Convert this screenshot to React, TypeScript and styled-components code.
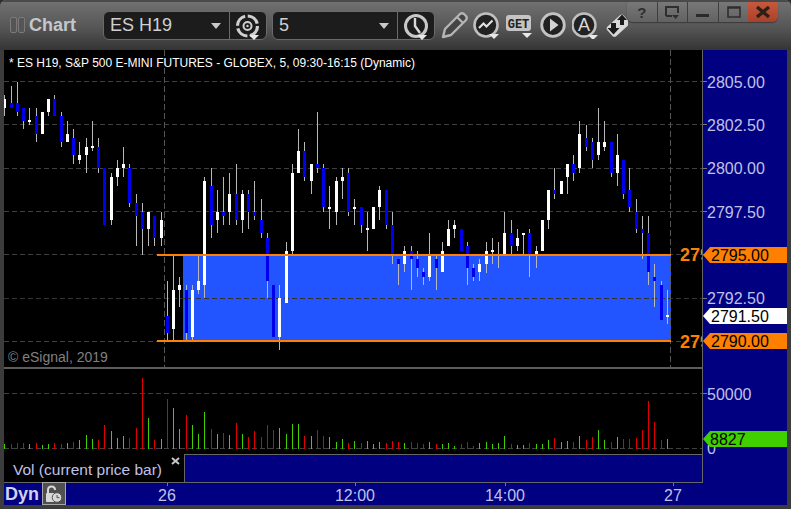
import React from "react";
import styled, { createGlobalStyle } from "styled-components";

const Global = createGlobalStyle`
  html, body { margin: 0; padding: 0; background: #2e2e2e; }
  body { font-family: "Liberation Sans", Arial, sans-serif; }
`;

// wick top, wick bottom, body top, body bottom, up?
const CANDLES: [number, number, number, number, number][] = [
  [95,116,99,108,1],[86,108,103,108,0],[82,116,103,112,0],[108,129,108,121,0],[108,125,120,122,1],
  [108,142,116,134,0],[112,134,112,134,1],[99,116,99,112,1],[95,116,99,116,0],[112,147,116,142,0],
  [121,142,134,142,1],[129,164,138,155,0],[142,164,155,160,1],[138,173,147,155,1],[121,151,146,148,1],
  [138,173,147,168,0],[168,225,168,225,0],[173,225,177,220,1],[160,186,168,177,1],[147,177,164,168,1],
  [164,207,168,203,0],[194,246,203,216,0],[203,255,212,229,0],[212,246,212,229,1],[216,246,216,238,0],
  [212,246,220,238,1],[281,340,316,333,0],[255,341,290,329,1],[277,307,285,290,1],[285,341,290,333,0],
  [285,341,290,337,1],[255,294,281,290,1],[177,298,181,285,1],[168,238,186,225,0],[190,233,212,220,1],
  [177,225,212,216,0],[173,225,194,212,1],[164,225,194,220,0],[190,233,194,220,1],[190,229,194,212,0],
  [181,220,212,216,0],[199,238,220,233,0],[233,298,238,281,0],[285,337,285,337,0],[285,350,298,337,1],
  [242,303,251,303,1],[164,255,173,251,1],[129,173,151,173,1],[142,181,151,177,0],[164,194,164,181,1],
  [112,173,164,168,0],[164,212,168,207,0],[186,229,207,209,1],[177,225,181,212,1],[168,199,177,181,1],
  [168,216,173,212,0],[199,225,207,209,1],[207,233,207,225,0],[212,251,228,230,1],[207,229,207,229,1],
  [186,220,190,207,1],[190,229,190,225,0],[212,264,225,255,0],[259,285,259,264,0],[246,272,251,264,1],
  [246,290,251,259,0],[251,277,259,268,0],[268,285,272,277,0],[233,281,255,277,1],[256,290,259,268,0],
  [242,272,251,272,1],[220,246,229,246,1],[220,238,225,229,1],[229,251,229,251,0],[242,285,246,268,0],
  [264,281,268,277,0],[259,281,264,272,1],[242,273,251,264,1],[238,264,250,252,1],[242,268,254,256,1],
  [212,255,233,255,1],[220,255,233,246,0],[229,251,238,246,1],[233,255,233,235,1],[229,277,233,255,0],
  [246,268,251,255,1],[220,251,220,251,1],[190,229,190,220,1],[168,199,190,194,0],[181,194,181,194,1],
  [164,194,164,177,1],[155,181,164,173,0],[121,173,134,168,1],[125,151,138,147,0],[138,168,142,160,0],
  [108,160,142,155,1],[121,151,142,147,1],[142,177,142,173,0],[134,186,155,173,1],[160,199,160,194,0],
  [168,212,190,207,0],[199,233,212,229,0],[216,259,229,233,0],[216,285,233,272,0],[264,307,277,281,0],
  [281,320,285,320,0],[290,324,315,317,1],
];

// top in the 3x crop (baseline at 250), g = green
const VOLUMES: [number, number][] = [
  [237,1],[237,0],[234,0],[234,0],[237,1],[234,0],[240,1],[237,1],[234,0],[237,0],[234,1],[231,0],[225,1],[210,1],[222,1],[225,0],
  [180,0],[198,1],[219,1],[213,1],[219,0],[189,0],[39,0],[159,1],[225,0],[222,1],[102,0],[129,1],[192,1],[150,0],[180,1],[207,1],
  [141,1],[192,0],[207,1],[204,0],[210,1],[174,0],[207,1],[216,0],[198,0],[216,0],[180,0],[195,0],[189,1],[207,1],[177,1],[177,1],
  [213,0],[213,1],[195,0],[213,0],[216,1],[231,1],[222,1],[234,0],[228,1],[234,0],[228,1],[237,1],[231,1],[234,0],[228,0],[231,0],
  [234,1],[231,0],[234,0],[237,0],[231,1],[237,0],[237,1],[234,1],[243,1],[237,0],[231,0],[243,0],[234,1],[231,1],[237,1],[234,1],
  [213,1],[237,0],[240,1],[240,1],[234,0],[237,1],[237,1],[225,1],[219,0],[231,1],[228,1],[231,0],[213,1],[225,0],[216,0],[195,1],
  [225,1],[231,0],[216,1],[222,0],[222,0],[219,0],[195,0],[108,0],[171,0],[225,0],[222,1],
];

const colOf = (i: number) => Math.floor(4.75 + 6.25 * i);
const GRID_Y = [81, 124, 168, 211, 254, 298, 341];
const AXIS_TEXT = "#c0c0e8";
const ORANGE = "#ff8000";

const Window = styled.div`
  width: 791px;
  height: 509px;
  background: #3c3c3c;
  overflow: hidden;
  display: flex;
  flex-direction: column;
  position: relative;
  border-radius: 6px 6px 0 0;
`;

const TitleBar = styled.header`
  height: 50px;
  box-sizing: border-box;
  padding: 11px 0 0 10px;
  display: flex;
  align-items: flex-start;
  background: linear-gradient(#727272 0, #686868 20%, #565656 55%, #343434 100%);
  box-shadow: inset 0 2px 0 #4a4a4a;
`;

const Brand = styled.div`
  width: 93px;
  height: 28px;
  display: flex;
  align-items: center;
  gap: 1px;
`;

const Grip = styled.span`
  width: 5px;
  height: 14px;
  border: 1px solid #7a7a7a;
  background: #555;
  border-radius: 2px;
`;

const BrandName = styled.span`
  margin-left: 3px;
  font-size: 18px;
  font-weight: 700;
  color: #c4c8cc;
`;

const Combo = styled.div<{ $width: number }>`
  width: ${(p) => p.$width}px;
  height: 29px;
  box-sizing: border-box;
  margin-right: 5px;
  display: flex;
  background: #1c1c1c;
  border: 1px solid #6a6a6a;
  border-radius: 6px;
`;

const Field = styled.div`
  flex: 1;
  display: flex;
  align-items: center;
  justify-content: space-between;
  padding: 0 8px 0 6px;
  font-size: 18px;
  color: #cfcfcf;
  border-right: 1px solid #6a6a6a;
`;

const Caret = styled.span`
  width: 0;
  height: 0;
  border-left: 5px solid transparent;
  border-right: 5px solid transparent;
  border-top: 6px solid #c8c8c8;
`;

const ComboIcon = styled.div`
  width: 36px;
  display: flex;
  align-items: center;
  justify-content: center;
`;

const IconStrip = styled.div`
  display: flex;
  align-items: center;
  height: 28px;
  margin-left: 1px;
`;

const ToolIcon = styled.svg<{ $w: number }>`
  width: ${(p) => p.$w}px;
  height: 28px;
  flex: none;
  display: block;
`;

const WindowButtons = styled.div`
  position: absolute;
  top: 2px;
  left: 627px;
  width: 151px;
  height: 20px;
  display: flex;
  border-radius: 2px 2px 6px 6px;
  overflow: hidden;
  box-shadow: 0 1px 1px #3a3a3a;
`;

const WinBtn = styled.div<{ $close?: boolean }>`
  flex: 1;
  display: flex;
  align-items: center;
  justify-content: center;
  font-size: 15px;
  font-weight: 700;
  color: #2e2e2e;
  background: ${(p) => (p.$close ? "linear-gradient(#c8583c, #a8412a)" : "linear-gradient(#787878, #626262)")};
  border-left: ${(p) => (p.$close ? "none" : "1px solid #3f3f3f")};
  &:first-child { border-left: none; }
`;

const Main = styled.div`
  display: flex;
  margin: 0 4px;
  height: 433px;
`;

const Panes = styled.div`
  width: 698px;
  display: flex;
  flex-direction: column;
  background: #000;
  border-bottom: 1px solid #666;
`;

const PaneSvg = styled.svg<{ $h: number }>`
  display: block;
  width: 698px;
  height: ${(p) => p.$h}px;
  background: #000;
  flex: none;
`;

const PaneDivider = styled.div`
  height: 2px;
  flex: none;
  background: #5c5c5c;
`;

const LegendRow = styled.div`
  flex: 1;
  display: flex;
`;

const Legend = styled.div`
  position: relative;
  width: 180px;
  box-sizing: border-box;
  padding: 7px 0 0 9px;
  font-size: 15.5px;
  line-height: 18px;
  color: ${AXIS_TEXT};
  background: #000;
`;

const LegendClose = styled.svg`
  position: absolute;
  top: 3px;
  right: 4px;
  width: 9px;
  height: 8px;
`;

const LegendFill = styled.div`
  flex: 1;
  background: #000080;
  border-top: 1px solid #666;
  border-left: 1px solid #666;
`;

const AxisSvg = styled.svg`
  display: block;
  width: 85px;
  height: 433px;
  background: #000080;
  flex: none;
`;

const TimeAxis = styled.div`
  margin: 0 4px;
  height: 22px;
  display: flex;
  align-items: stretch;
  background: #000080;
`;

const DynLabel = styled.span`
  width: 38px;
  box-sizing: border-box;
  padding-left: 1px;
  font-size: 18px;
  font-weight: 700;
  line-height: 22px;
  color: #d0d0f0;
`;

const LockButton = styled.div`
  width: 24px;
  height: 23px;
  margin-top: -1px;
  box-sizing: border-box;
  border: 1px solid #a8a8a8;
  background: #505050;
  display: flex;
  align-items: center;
  justify-content: center;
`;

const TimeSvg = styled.svg`
  display: block;
  flex: 1;
  height: 22px;
`;

const Arrow = ({ x, y }: { x: number; y: number }) => (
  <polygon points={`${x - 5},${y} ${x + 5},${y} ${x},${y + 5}`} fill="#e8e8e8" />
);

const GearIcon = () => (
  <ToolIcon $w={28} viewBox="0 0 28 28">
    <circle cx="13.5" cy="14" r="10" fill="none" stroke="#cfcfcf" strokeWidth="3.2" strokeDasharray="13 2.7" />
    <circle cx="13.5" cy="14" r="4" fill="none" stroke="#cfcfcf" strokeWidth="2" />
    <circle cx="13.5" cy="14" r="1.2" fill="#cfcfcf" />
    <Arrow x={20} y={23} />
  </ToolIcon>
);

const ClockIcon = () => (
  <ToolIcon $w={28} viewBox="0 0 28 28">
    <circle cx="14" cy="14" r="10.5" fill="#1c1c1c" stroke="#c8c8c8" strokeWidth="3" />
    <path d="M13 6 V14 L18 21" fill="none" stroke="#d8d8d8" strokeWidth="2.4" />
    <Arrow x={20} y={23} />
  </ToolIcon>
);

const PencilIcon = () => (
  <ToolIcon $w={32} viewBox="3 0 32 28">
    <path d="M5 26 L7 18 L22 3 Q24 1.5 26 3 L28 5 Q29.5 7 28 9 L13 24 Z M19 6 L25 12" fill="#444" stroke="#b4b4b4" strokeWidth="2.4" strokeLinejoin="round" />
  </ToolIcon>
);

const TrendIcon = () => (
  <ToolIcon $w={33} viewBox="1 0 33 28">
    <circle cx="14" cy="14" r="11.5" fill="#222" stroke="#c0c0c0" strokeWidth="2.6" />
    <path d="M7 17 L11.5 12.5 L14.5 15.5 L20.5 9.5" fill="none" stroke="#e4e4e4" strokeWidth="2" />
    <Arrow x={22} y={23} />
  </ToolIcon>
);

const GetIcon = () => (
  <ToolIcon $w={33} viewBox="1 0 33 28">
    <rect x="1" y="4" width="25" height="16" rx="3" fill="#c4c4c4" />
    <text x="13.5" y="16.5" textAnchor="middle" fontFamily="'Liberation Mono', monospace" fontSize="12" fontWeight="700" fill="#222">GET</text>
    <Arrow x={22} y={22} />
  </ToolIcon>
);

const PlayIcon = () => (
  <ToolIcon $w={33} viewBox="-1 0 33 28">
    <circle cx="13" cy="14" r="11.3" fill="#222" stroke="#c4c4c4" strokeWidth="2.8" />
    <polygon points="10,7.5 10,20.5 18.5,14" fill="#d4d4d4" />
  </ToolIcon>
);

const LetterIcon = () => (
  <ToolIcon $w={34} viewBox="0 0 34 28">
    <circle cx="12" cy="14" r="11.5" fill="#222" stroke="#c0c0c0" strokeWidth="2.4" />
    <text x="12" y="20" textAnchor="middle" fontFamily="'Liberation Sans', sans-serif" fontSize="18" fill="#dcdcdc">A</text>
    <Arrow x={21} y={24} />
  </ToolIcon>
);

const TransferIcon = () => (
  <ToolIcon $w={22} viewBox="0 0 22 28">
    <rect x="1" y="9" width="22" height="13" rx="3" transform="rotate(-42 11 15)" fill="#d8d8d8" />
    <path d="M11 9 L16 3.5 L21 9 H18 V14 H14 V9 Z" fill="#1a1a1a" />
    <path d="M1.5 17 H5 V12 H10 V17 H13.5 L7.5 23.5 Z" fill="#1a1a1a" />
  </ToolIcon>
);

const PriceGraph = () => (
  <PaneSvg $h={317} viewBox="4 50 698 317" shapeRendering="crispEdges">
    <rect x="183" y="255" width="488" height="86" fill="#2255ff" />
    {GRID_Y.map((y) => (
      <line key={y} x1="4" x2="702" y1={y + 0.5} y2={y + 0.5} stroke={y === 298 ? "#333" : "#404040"} strokeDasharray="5 3" />
    ))}
    {[164, 670].map((x) => (
      <line key={x} x1={x + 0.5} x2={x + 0.5} y1="50" y2="367" stroke="#555" strokeDasharray="6 3" />
    ))}
    {CANDLES.map(([hi, lo, top, bot, up], i) => {
      const c = colOf(i);
      return (
        <g key={i}>
          <rect x={c} y={hi} width="1" height={lo - hi} fill="#b8b8b8" />
          <rect x={c - 1} y={top} width="3" height={bot - top} fill={up ? "#fff" : "#0000ee"} />
        </g>
      );
    })}
    <rect x="157" y="254" width="514" height="2" fill={ORANGE} />
    <rect x="157" y="340" width="514" height="2" fill={ORANGE} />
    <g shapeRendering="auto">
      <text x="9" y="66.5" fontSize="12" fill="#fff">* ES H19, S&amp;P 500 E-MINI FUTURES - GLOBEX, 5, 09:30-16:15 (Dynamic)</text>
      <text x="8" y="362" fontSize="14" fill="#808080">© eSignal, 2019</text>
      <text x="680" y="261" fontSize="18" fontWeight="700" fill={ORANGE}>2795.00</text>
      <text x="680" y="348" fontSize="18" fontWeight="700" fill={ORANGE}>2790.00</text>
    </g>
  </PaneSvg>
);

const VolumeGraph = () => (
  <PaneSvg $h={85} viewBox="4 369 698 85" shapeRendering="crispEdges">
    <line x1="4" x2="702" y1="393.5" y2="393.5" stroke="#404040" strokeDasharray="5 3" />
    <line x1="4" x2="702" y1="448.5" y2="448.5" stroke="#404040" strokeDasharray="5 3" />
    {VOLUMES.map(([top, green], i) => {
      const y = 365 + Math.round(top / 3);
      return <rect key={i} x={colOf(i)} y={y} width="1" height={449 - y} fill={green ? "#40d000" : "#e00000"} />;
    })}
  </PaneSvg>
);

const PriceTag = ({ y, fill, label, base }: { y: number; fill: string; label: string; base: number }) => (
  <g>
    <polygon points={`703,${y + 8} 710,${y} 787,${y} 787,${y + 16} 710,${y + 16}`} fill={fill} />
    <text x="711" y={base} fontSize="16" fill="#000">{label}</text>
  </g>
);

const Axis = () => (
  <AxisSvg viewBox="702 50 85 433">
    <rect x="702" y="50" width="1" height="433" fill="#666" />
    {[[81, "2805.00", 88], [124, "2802.50", 131], [168, "2800.00", 174], [211, "2797.50", 218], [254, "", 0], [298, "2792.50", 304]].map(
      ([y, label, base]) => (
        <g key={y as number}>
          <rect x="703" y={y as number} width="4" height="1" fill="#777" />
          {label ? <text x="707" y={base as number} fontSize="16" fill={AXIS_TEXT}>{label}</text> : null}
        </g>
      )
    )}
    <PriceTag y={247} fill={ORANGE} label="2795.00" base={261} />
    <PriceTag y={308} fill="#fff" label="2791.50" base={322} />
    <PriceTag y={333} fill={ORANGE} label="2790.00" base={347} />
    <rect x="703" y="393" width="4" height="1" fill="#777" />
    <text x="707" y="400" fontSize="16" fill={AXIS_TEXT}>50000</text>
    <text x="707" y="454" fontSize="16" fill={AXIS_TEXT}>0</text>
    <polygon points="703,439 710,431 787,431 787,447 710,447" fill="#40d000" />
    <text x="710" y="445" fontSize="16" fill="#000">8827</text>
  </AxisSvg>
);

const TIME_LABELS: [number, string][] = [[167, "26"], [355, "12:00"], [505, "14:00"], [673, "27"]];

export default function App() {
  return (
    <Window>
      <Global />
      <TitleBar>
        <Brand>
          <Grip />
          <Grip />
          <BrandName>Chart</BrandName>
        </Brand>
        <Combo $width={164}>
          <Field>
            ES H19
            <Caret />
          </Field>
          <ComboIcon><GearIcon /></ComboIcon>
        </Combo>
        <Combo $width={163}>
          <Field>
            5
            <Caret />
          </Field>
          <ComboIcon><ClockIcon /></ComboIcon>
        </Combo>
        <IconStrip>
          <PencilIcon />
          <TrendIcon />
          <GetIcon />
          <PlayIcon />
          <LetterIcon />
          <TransferIcon />
        </IconStrip>
      </TitleBar>
      <WindowButtons>
        <WinBtn>?</WinBtn>
        <WinBtn>
          <svg width="18" height="16" viewBox="0 0 18 16">
            <path d="M3 12 V3 H15 V9 M3 12 H9" fill="none" stroke="#2e2e2e" strokeWidth="2" />
            <polygon points="9,11 16,11 12.5,15" fill="#2e2e2e" />
          </svg>
        </WinBtn>
        <WinBtn>
          <svg width="16" height="16" viewBox="0 0 16 16"><rect x="1" y="10" width="13" height="3" fill="#2a2a2a" /></svg>
        </WinBtn>
        <WinBtn>
          <svg width="16" height="16" viewBox="0 0 16 16"><path d="M2 3 H14 V13 H2 Z M2 4 H14" fill="none" stroke="#2e2e2e" strokeWidth="1.6" /></svg>
        </WinBtn>
        <WinBtn $close>
          <svg width="16" height="14" viewBox="0 0 16 14"><path d="M2 2 L14 12 M14 2 L2 12" stroke="#2e2018" strokeWidth="3.4" /></svg>
        </WinBtn>
      </WindowButtons>
      <Main>
        <Panes>
          <PriceGraph />
          <PaneDivider />
          <VolumeGraph />
          <LegendRow>
            <Legend>
              Vol (current price bar)
              <LegendClose viewBox="0 0 9 8">
                <path d="M1 1 L8 7 M8 1 L1 7" stroke="#c8c8c8" strokeWidth="2" />
              </LegendClose>
            </Legend>
            <LegendFill />
          </LegendRow>
        </Panes>
        <Axis />
      </Main>
      <TimeAxis>
        <DynLabel>Dyn</DynLabel>
        <LockButton>
          <svg width="20" height="20" viewBox="0 0 20 20">
            <path d="M4 9 V6 Q4 2.5 7.5 2.5 Q11 2.5 11 6" fill="none" stroke="#d8d8d8" strokeWidth="2" />
            <rect x="2" y="9" width="10" height="9" rx="1" fill="#d8d8d8" />
            <circle cx="13" cy="13.5" r="4.8" fill="#d8d8d8" stroke="#505050" strokeWidth="1" />
            <path d="M13 11 V13.7 H15.5" fill="none" stroke="#505050" strokeWidth="1" />
          </svg>
        </LockButton>
        <TimeSvg viewBox="66 483 721 22">
          {TIME_LABELS.map(([x, label]) => (
            <g key={label}>
              <rect x={x} y="483" width="1" height="3" fill="#777" />
              <text x={x} y="501" fontSize="16" textAnchor="middle" fill={AXIS_TEXT}>{label}</text>
            </g>
          ))}
        </TimeSvg>
      </TimeAxis>
    </Window>
  );
}
